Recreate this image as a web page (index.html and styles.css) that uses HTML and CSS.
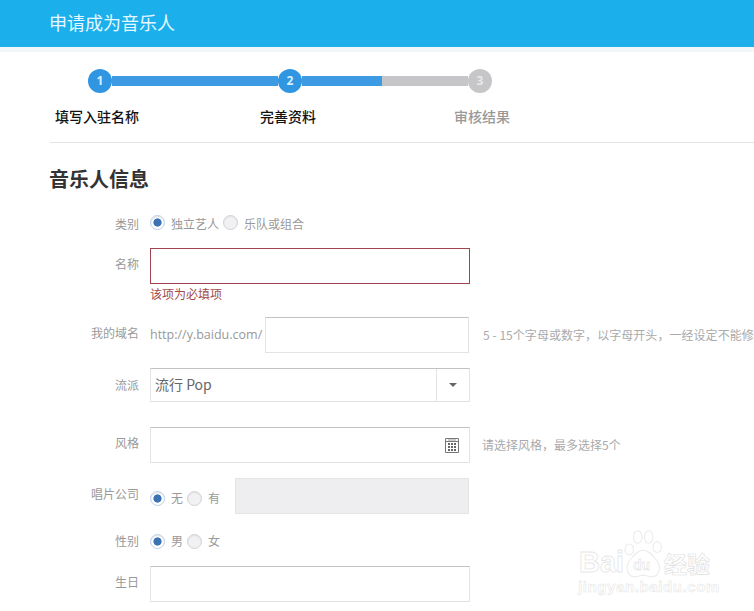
FILE: index.html
```html
<!DOCTYPE html>
<html lang="zh-CN">
<head>
<meta charset="utf-8">
<title>申请成为音乐人</title>
<link rel="stylesheet" href="styles.css">
</head>
<body>
<header class="topbar">申请成为音乐人</header>
<div class="strip"></div>
<div class="steps">
  <div class="track">
    <span class="dot">1</span><span class="seg seg-a"></span>
    <span class="dot">2</span><span class="seg seg-b"></span><span class="seg seg-c"></span>
    <span class="dot dot-off">3</span>
  </div>
  <div class="step-labels">
    <span class="sl sl-1">填写入驻名称</span>
    <span class="sl sl-2">完善资料</span>
    <span class="sl sl-3">审核结果</span>
  </div>
</div>
<main class="content">
  <h1 class="title">音乐人信息</h1>
  <div class="row row-type">
    <label class="lbl">类别</label>
    <div class="opts">
      <span class="radio on"></span><span class="opt">独立艺人</span>
      <span class="radio tight"></span><span class="opt">乐队或组合</span>
    </div>
  </div>
  <div class="row row-name">
    <label class="lbl lbl-name">名称</label>
    <div class="col">
      <div class="box box-err"></div>
      <div class="err">该项为必填项</div>
    </div>
  </div>
  <div class="row row-domain">
    <label class="lbl lbl-up">我的域名</label>
    <span class="prefix">http://y.baidu.com/</span>
    <div class="box box-domain"></div>
    <span class="hint hint-domain">5 - 15个字母或数字，以字母开头，一经设定不能修</span>
  </div>
  <div class="row row-genre">
    <label class="lbl">流派</label>
    <div class="box box-select">
      <span class="sel-text">流行 Pop</span>
      <span class="sel-btn"><span class="caret"></span></span>
    </div>
  </div>
  <div class="row row-style">
    <label class="lbl lbl-up">风格</label>
    <div class="box box-cal">
      <svg class="cal" width="14" height="15" viewBox="0 0 14 15"><path d="M.5.5h13v14H.5zM.5 3.5h13" fill="none" stroke="#777"/><path d="M3 1.5h8v1H3z" fill="#999"/><path d="M3 5h2v2H3zM6 5h2v2H6zM9 5h2v2H9zM3 8h2v2H3zM6 8h2v2H6zM9 8h2v2H9zM3 11h2v2H3zM6 11h2v2H6zM9 11h2v2H9z" fill="#666"/></svg>
    </div>
    <span class="hint hint-style">请选择风格，最多选择5个</span>
  </div>
  <div class="row row-label">
    <label class="lbl lbl-label">唱片公司</label>
    <div class="opts opts-short">
      <span class="radio on"></span><span class="opt">无</span>
      <span class="radio tight"></span><span class="opt">有</span>
    </div>
    <div class="box box-disabled"></div>
  </div>
  <div class="row row-sex">
    <label class="lbl">性别</label>
    <div class="opts opts-short">
      <span class="radio on"></span><span class="opt">男</span>
      <span class="radio tight"></span><span class="opt">女</span>
    </div>
  </div>
  <div class="row row-birth">
    <label class="lbl">生日</label>
    <div class="box box-birth"></div>
  </div>
</main>
<div class="wm">
  <svg class="wm-paw" width="42" height="49" viewBox="0 0 54 63" preserveAspectRatio="none">
    <g fill="#fff" stroke="#ececec" stroke-width="1.4">
      <ellipse cx="8" cy="25" rx="5.5" ry="7"/><ellipse cx="19" cy="9" rx="5.5" ry="8"/><ellipse cx="33" cy="9" rx="5.5" ry="8"/><ellipse cx="44" cy="22" rx="5.5" ry="7"/>
      <path d="M26 26c8 0 13 8 18 14 6 8 2 21-8 20-4 0-7-2-10-2s-6 2-10 2c-10 1-14-12-8-20 5-6 10-14 18-14z"/>
    </g>
  </svg>
  <span class="wm-bai">Bai</span><span class="wm-du">du</span><span class="wm-jy">经验</span>
  <div class="wm-url">jingyan.baidu.com</div>
</div>
</body>
</html>
```
FILE: styles.css
```css
* { box-sizing: border-box; }
html, body { margin: 0; padding: 0; height: 611px; overflow: hidden; }
body {
  position: relative;
  background: #fff;
  font-family: "Noto Sans CJK SC", "Open Sans", sans-serif;
  font-size: 12px;
  color: #999;
}
.topbar {
  height: 47px;
  background: #1bb0ec;
  color: #e6f8ff;
  font-size: 18px;
  line-height: 45px;
  padding-left: 49px;
}
.strip { height: 5px; background: #f2f7fa; }
.steps {
  height: 91px;
  margin-left: 50px;
  border-bottom: 1px solid #e4e4e4;
  padding-top: 17px;
}
.track { display: flex; align-items: center; margin-left: 38px; height: 24px; }
.dot {
  flex: none;
  width: 24px;
  height: 24px;
  border-radius: 50%;
  background: #3096e2;
  color: #d8f0ff;
  font: bold 12px/24px "Open Sans", sans-serif;
  text-align: center;
}
.dot-off { background: #c6c5c8; color: #e8e8e8; }
.seg { height: 10px; background: #3c9be3; }
.seg-a { width: 166px; }
.seg-b { width: 80px; }
.seg-c { width: 86px; background: #c6c5c8; }
.step-labels { display: flex; margin-top: 12px; margin-left: 5px; font-size: 14px; font-weight: 500; line-height: 22px; color: #111; }
.sl-2 { margin-left: 121px; }
.sl-3 { margin-left: 138px; color: #999; }
.title {
  margin: 22px 0 0 49px;
  font-size: 20px;
  font-weight: 700;
  line-height: 28px;
  color: #333;
}
.row { display: flex; align-items: flex-start; }
.lbl { flex: none; width: 139px; margin-right: 11px; text-align: right; color: #999; line-height: 18px; }
.row-type { margin-top: 21px; height: 33px; }
.row-type .lbl { margin-top: 1px; }
.opts { display: flex; align-items: center; height: 20px; }
.opt { color: #999; line-height: 18px; margin-left: 6px; }
.radio {
  flex: none;
  width: 15px;
  height: 15px;
  border-radius: 50%;
  border: 1px solid #cfd2d6;
  background: #f1f1f3;
  box-shadow: inset 0 1px 1px #e0e0e0;
}
.radio.on { background: radial-gradient(circle, #3b73b3 0 3.7px, #fff 4.5px); border-color: #bcd0e6; }
.radio.tight { margin-left: 4px; }
.row-type .radio { margin-top: -4px; }
.row-name { margin-top: 1px; }
.lbl-name { margin-top: 7px; }
.col { display: flex; flex-direction: column; }
.box { background: #fff; border: 1px solid #e3e3e3; border-top-color: #c2c2c4; }
.box-err { width: 320px; height: 36px; border: 1px solid #a0454f; }
.err { color: #a34a4a; line-height: 18px; margin-top: 1px; }
.row-domain { margin-top: 14px; height: 36px; }
.row-domain .lbl { margin-top: 7px; }
.prefix { flex: none; width: 115px; font: 12.5px/36px "Open Sans", sans-serif; color: #999; }
.box-domain { flex: none; width: 204px; height: 36px; }
.hint { flex: none; line-height: 36px; color: #aaa; white-space: nowrap; }
.hint-domain { margin-left: 14px; letter-spacing: .05px; }
.row-genre { margin-top: 15px; }
.row-genre .lbl { margin-top: 8px; }
.box-select { width: 320px; height: 34px; display: flex; align-items: center; justify-content: space-between; }
.sel-text { padding-left: 4px; font: 14px/30px "Noto Sans CJK SC", sans-serif; color: #666; margin-bottom: 2px; }
.sel-btn { width: 33px; height: 32px; border-left: 1px solid #e3e3e3; display: flex; align-items: center; justify-content: center; }
.caret { width: 0; height: 0; border: 4px solid transparent; border-top: 4px solid #666; border-bottom: 0; }
.row-style { margin-top: 25px; }
.row-style .lbl { margin-top: 7px; }
.box-cal { flex: none; width: 320px; height: 36px; display: flex; align-items: center; justify-content: flex-end; padding-right: 10px; }
.hint-style { margin-left: 12px; }
.row-label { margin-top: 15px; height: 36px; }
.lbl-label { margin-top: 7px; }
.row-label .opts { margin-top: 10px; }
.box-disabled { width: 234px; height: 36px; margin-left: 15px; background: #eeedef; border: 1px solid #e4e4e6; }
.row-sex { margin-top: 17px; height: 20px; }
.row-sex .lbl { margin-top: 1px; }
.row-birth { margin-top: 15px; }
.row-birth .lbl { margin-top: 7px; }
.box-birth { width: 320px; height: 36px; }
.wm { position: absolute; left: 578px; top: 530px; width: 170px; height: 70px; pointer-events: none; }
.wm-paw { position: absolute; left: 45px; top: 0; }
.wm-bai, .wm-du, .wm-jy { position: absolute; color: #fff; }
.wm-bai { left: 1px; top: 17px; font: 700 29px/30px "Liberation Sans", sans-serif; -webkit-text-stroke: .8px #e6e6e6; }
.wm-du { left: 55px; top: 27px; font: 700 14px/16px "Liberation Sans", sans-serif; -webkit-text-stroke: .4px #d4d4d4; }
.wm-jy { left: 86px; top: 20px; font: 700 23px/26px "Noto Sans CJK SC", sans-serif; -webkit-text-stroke: .6px #dedede; }
.wm-url { position: absolute; left: 0; top: 48px; font: 700 15px/18px "Liberation Sans", sans-serif; letter-spacing: .6px; color: #fff; -webkit-text-stroke: .5px #e4e4e4; }
```
